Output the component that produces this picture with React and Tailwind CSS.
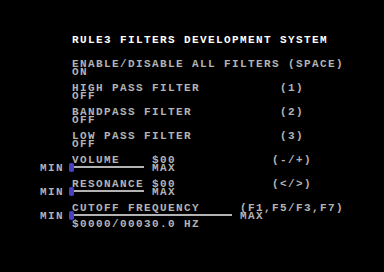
const grey = 'text-[#b3b3b3]';

// pad a label to a column on the 40x25 text screen
const at = (left, col, right) => left.padEnd(col, ' ') + right;

const Row = ({ children, className = grey }) => (
  <div className={`h-[8px] whitespace-pre ${className}`}>{children}</div>
);

const Slider = ({ cols }) => (
  <div className={`flex h-[8px] ${grey}`}>
    <span className="w-[40px] whitespace-pre"> MIN</span>
    <div className="relative" style={{ width: cols * 8 }}>
      <div className="mt-[2px] h-[2px] bg-[#b3b3b3]" />
      <div className="absolute left-[-3px] top-[-1px] h-[9px] w-[5px] rounded-[2px] bg-[#4b3fc4]" />
    </div>
    <span className="w-[8px]" />
    <span>MAX</span>
  </div>
);

const Blank = () => <div className="h-[8px]" />;

export default function App() {
  return (
    <div className="h-[272px] w-[384px] overflow-hidden bg-black pl-[32px] pt-[36px]">
      <div
        className="w-[320px] text-[11px] font-bold leading-[8px] tracking-[1.4px]"
        style={{ fontFamily: '"Liberation Mono", "DejaVu Sans Mono", monospace' }}
      >
        <Row className="text-white">{'     RULE3 FILTERS DEVELOPMENT SYSTEM'}</Row>
        <Blank />
        <Blank />
        <Row>{'     ENABLE/DISABLE ALL FILTERS (SPACE)'}</Row>
        <Row>{'     ON'}</Row>
        <Blank />
        <Row>{at('     HIGH PASS FILTER', 31, '(1)')}</Row>
        <Row>{'     OFF'}</Row>
        <Blank />
        <Row>{at('     BANDPASS FILTER', 31, '(2)')}</Row>
        <Row>{'     OFF'}</Row>
        <Blank />
        <Row>{at('     LOW PASS FILTER', 31, '(3)')}</Row>
        <Row>{'     OFF'}</Row>
        <Blank />
        <Row>{at('     VOLUME    $00', 30, '(-/+)')}</Row>
        <Slider cols={9} />
        <Blank />
        <Row>{at('     RESONANCE $00', 30, '(</>)')}</Row>
        <Slider cols={9} />
        <Blank />
        <Row>{at('     CUTOFF FREQUENCY', 26, '(F1,F5/F3,F7)')}</Row>
        <Slider cols={20} />
        <Row>{'     $0000/00030.0 HZ'}</Row>
      </div>
    </div>
  );
}
